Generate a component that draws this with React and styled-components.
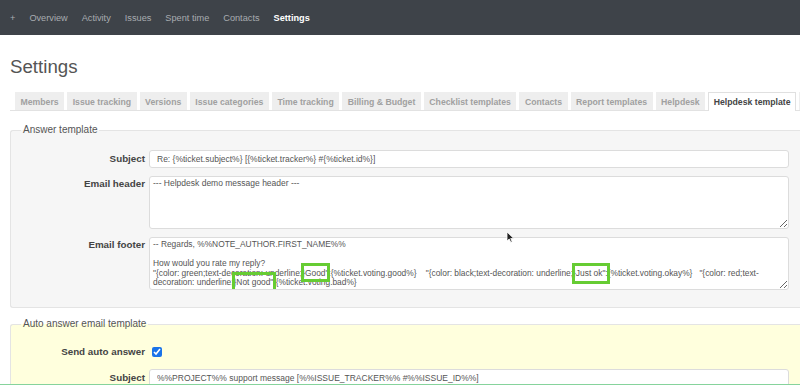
import React from "react";
import styled, { createGlobalStyle } from "styled-components";

const GlobalStyle = createGlobalStyle`
    html, body {
        margin: 0;
        padding: 0;
        background: #fff;
        overflow: hidden;
    }
    body {
        font-family: "Liberation Sans", Arial, sans-serif;
        color: #333;
    }
`;

const TopMenu = styled.div`
    height: 35px;
    background: #3e4349;
    display: flex;
    align-items: center;
    gap: 14px;
    padding: 0 10px;
`;

const MenuItem = styled.span`
    font-size: 9.2px;
    color: ${(p) => (p.$selected ? "#fff" : "#a8acb0")};
    font-weight: ${(p) => (p.$selected ? "bold" : "normal")};
`;

const Content = styled.div`
    padding: 0 10px;
    position: relative;
`;

const Title = styled.h2`
    margin: 22px 0 0;
    font-size: 18.7px;
    line-height: 20px;
    font-weight: normal;
    color: #555;
`;

const Tabs = styled.div`
    margin-top: 15px;
    display: flex;
    gap: 3px;
    padding-left: 5px;
    border-bottom: 1px solid #e2e2e2;
    width: calc(100% + 20px);
    white-space: nowrap;
`;

const Tab = styled.span`
    flex: none;
    box-sizing: border-box;
    padding: 0 4.5px;
    display: flex;
    align-items: center;
    font-size: 8.7px;
    font-weight: bold;
    color: ${(p) => (p.$active ? "#444" : "#a0a0a0")};
    background: ${(p) => (p.$active ? "#fff" : "#eee")};
    border: 1px solid ${(p) => (p.$active ? "#e0e0e0" : "transparent")};
    border-bottom: none;
    margin-bottom: ${(p) => (p.$active ? "-1px" : "0")};
    height: ${(p) => (p.$active ? "19px" : "18px")};
`;

const Box = styled.fieldset`
    margin: ${(p) => p.$top}px -20px 0 0;
    padding: 14px 0 ${(p) => p.$bottom}px 0;
    border: 1px solid #e4e4e4;
    border-right: none;
    border-radius: 3px;
    background: ${(p) => p.$bg};
    min-width: 0;
`;

const Legend = styled.legend`
    margin-left: 10px;
    padding: 0 2px;
    font-size: 10px;
    line-height: 12px;
    color: #555;
`;

const Rows = styled.div`
    display: grid;
    grid-template-columns: 134px 640px;
    column-gap: 4px;
    row-gap: ${(p) => p.$gap}px;
`;

const Label = styled.label`
    text-align: right;
    font-size: 9.8px;
    font-weight: bold;
    line-height: 12px;
    color: #444;
    padding-top: ${(p) => (p.$center ? "0" : "2px")};
    align-self: ${(p) => (p.$center ? "center" : "start")};
`;

const TextInput = styled.input`
    height: 18px;
    box-sizing: border-box;
    border: 1px solid #dcdcdc;
    border-radius: 3px;
    padding: 0 7px;
    font-family: "Liberation Sans", Arial, sans-serif;
    font-size: 8.5px;
    color: #555;
    background: #fff;
    outline: none;
`;

const TextArea = styled.textarea`
    height: 53px;
    box-sizing: border-box;
    border: 1px solid #dcdcdc;
    border-radius: 3px;
    padding: 1px 3px;
    font-family: "Liberation Sans", Arial, sans-serif;
    font-size: 8.5px;
    line-height: 10px;
    color: #555;
    background: #fff;
    resize: vertical;
    outline: none;
`;

const FakeArea = styled.div`
    height: 53px;
    box-sizing: border-box;
    border: 1px solid #dcdcdc;
    border-radius: 3px;
    padding: 2px 3px;
    font-size: 8.4px;
    line-height: 9.5px;
    color: #555;
    background: #fff;
    white-space: pre-wrap;
    resize: vertical;
    overflow: hidden;
`;

const Marked = styled.span`
    position: relative;
    &::after {
        content: "";
        position: absolute;
        left: ${(p) => p.$l}px;
        right: ${(p) => p.$r}px;
        top: -5px;
        bottom: ${(p) => p.$b}px;
        border: 3px solid #66cc33;
    }
`;

const CheckCell = styled.div`
    display: flex;
    align-items: center;
    min-height: 16px;
`;

const Check = styled.input`
    width: 10px;
    height: 10px;
    margin: 0 0 0 3px;
    accent-color: #1a73e8;
`;

const Pointer = styled.svg`
    position: absolute;
    left: 506px;
    top: 174px;
`;

const BottomLine = styled.div`
    position: fixed;
    left: 0;
    right: 0;
    bottom: 0;
    height: 1px;
    background: #86d39c;
`;

const menu = ["+", "Overview", "Activity", "Issues", "Spent time", "Contacts"];
const tabs = [
    "Members",
    "Issue tracking",
    "Versions",
    "Issue categories",
    "Time tracking",
    "Billing & Budget",
    "Checklist templates",
    "Contacts",
    "Report templates",
    "Helpdesk",
    "Helpdesk template",
    "Mail",
];

export default function App() {
    return (
        <>
            <GlobalStyle />
            <TopMenu>
                {menu.map((m) => (
                    <MenuItem key={m}>{m}</MenuItem>
                ))}
                <MenuItem $selected>Settings</MenuItem>
            </TopMenu>
            <Content>
                <Title>Settings</Title>
                <Tabs>
                    {tabs.map((t) => (
                        <Tab key={t} $active={t === "Helpdesk template"}>{t}</Tab>
                    ))}
                </Tabs>

                <Box $top={13} $bottom={17} $bg="#f6f6f6">
                    <Legend>Answer template</Legend>
                    <Rows $gap={8}>
                        <Label $center>Subject</Label>
                        <TextInput readOnly value="Re: {%ticket.subject%} [{%ticket.tracker%} #{%ticket.id%}]" />
                        <Label>Email header</Label>
                        <TextArea readOnly value="--- Helpdesk demo message header ---" />
                        <Label>Email footer</Label>
                        <FakeArea>
                            {"-- Regards, %%NOTE_AUTHOR.FIRST_NAME%%\n\nHow would you rate my reply?\n\"{color: green;text-decoration: underline;}"}
                            <Marked $l={-4} $r={-5} $b={-4}>Good</Marked>
                            {"\":{%ticket.voting.good%}    \"{color: black;text-decoration: underline;}"}
                            <Marked $l={-4} $r={-8} $b={-6}>Just ok</Marked>
                            {"\":{%ticket.voting.okay%}   \"{color: red;text-\ndecoration: underline;}"}
                            <Marked $l={-4} $r={-6} $b={-5}>Not good</Marked>
                            {"\":{%ticket.voting.bad%}"}
                        </FakeArea>
                    </Rows>
                </Box>

                <Box $top={10} $bottom={17} $bg="#ffffdd">
                    <Legend>Auto answer email template</Legend>
                    <Rows $gap={9}>
                        <Label $center>Send auto answer</Label>
                        <CheckCell>
                            <Check type="checkbox" defaultChecked />
                        </CheckCell>
                        <Label $center>Subject</Label>
                        <TextInput readOnly value="%%PROJECT%% support message [%%ISSUE_TRACKER%% #%%ISSUE_ID%%]" />
                    </Rows>
                </Box>

                <Pointer width="9" height="12" viewBox="0 0 9 12">
                    <path d="M1 1 L1 10 L3.2 8 L4.8 11.3 L6.2 10.7 L4.7 7.5 L7.8 7.5 Z" fill="#222" stroke="#fff" strokeWidth="0.8" />
                </Pointer>
            </Content>
            <BottomLine />
        </>
    );
}
